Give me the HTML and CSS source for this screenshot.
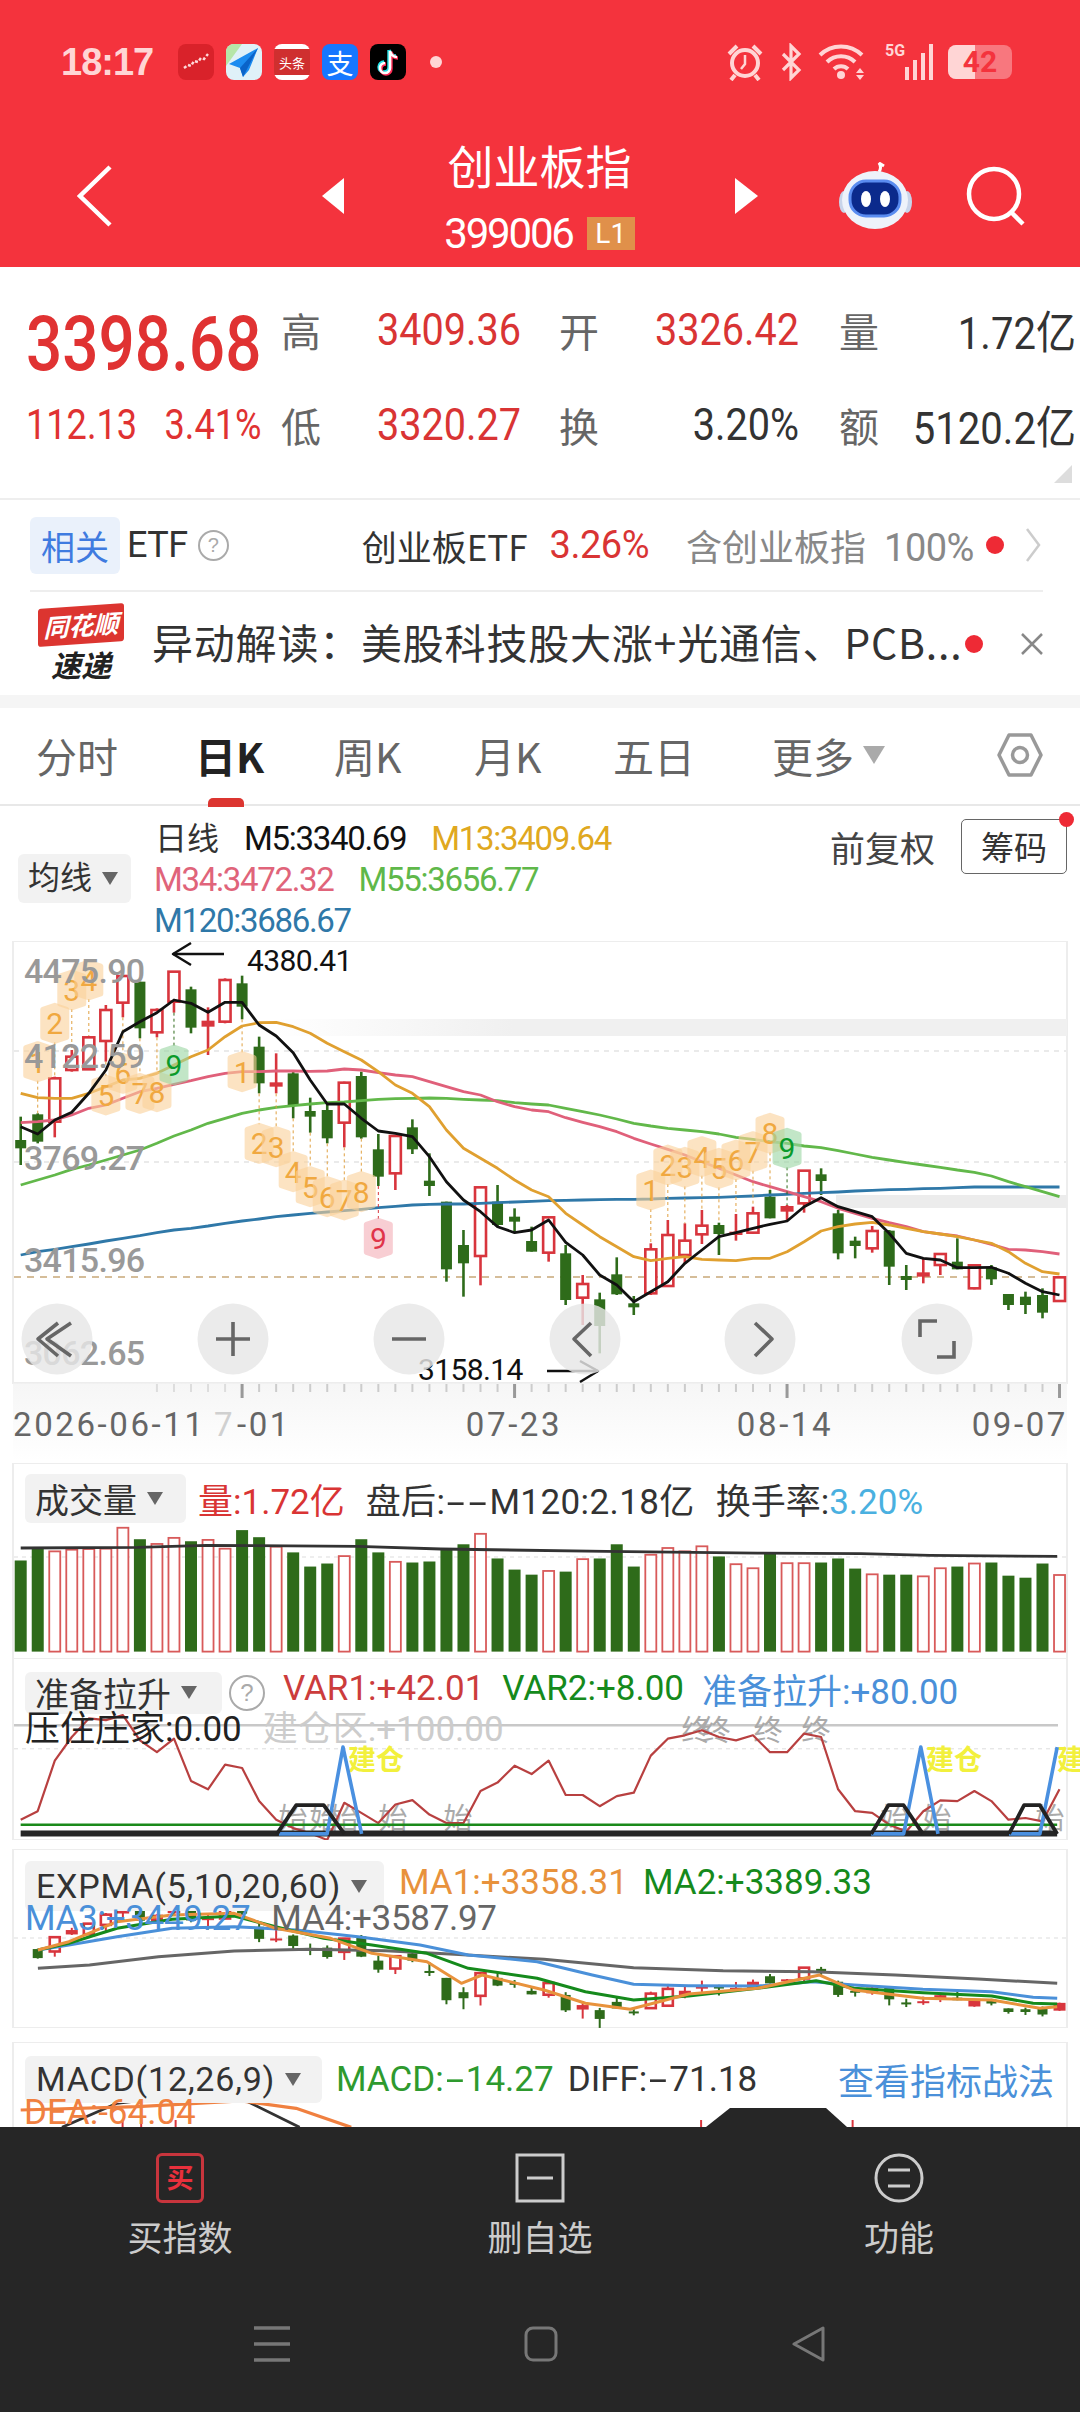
FILE: index.html
```html
<!DOCTYPE html>
<html lang="zh-CN">
<head>
    <meta charset="UTF-8">
    <meta name="viewport" content="width=device-width, initial-scale=1.0">
    <title>创业板指</title>
    <link rel="stylesheet" href="styles.css">
</head>
<body>
<div class="page">
    <header class="top">
        <div class="status">
            <span class="clock">18:17</span>
            <div class="apps">
                <span class="app app-red"><svg width="36" height="36" viewBox="0 0 36 36"><path d="M6 24l4-3 3 1 3-5 4 1 3-4 3 1 4-5" fill="none" stroke="#ffd9d9" stroke-width="2.4" stroke-dasharray="3 2"/></svg></span>
                <span class="app app-plane"><svg width="36" height="36" viewBox="0 0 36 36"><path d="M0 0h16L0 22z" fill="#b6e6a8"/><path d="M32 4L3 20l11 4 3 9 6-7z" fill="#1c8cf0"/><path d="M14 24L32 4 17 33z" fill="#0a63c8"/></svg></span>
                <span class="app app-news">头条</span>
                <span class="app app-pay">支</span>
                <span class="app app-tik"><svg width="36" height="36" viewBox="0 0 36 36"><path d="M20 7v17a5 5 0 1 1-5-5M20 7c1 4 4 6 7 6" fill="none" stroke="#25e0e6" stroke-width="3.4" transform="translate(-1 -1)"/><path d="M20 7v17a5 5 0 1 1-5-5M20 7c1 4 4 6 7 6" fill="none" stroke="#fe2c55" stroke-width="3.4" transform="translate(1 1)"/><path d="M20 7v17a5 5 0 1 1-5-5M20 7c1 4 4 6 7 6" fill="none" stroke="#fff" stroke-width="2.6"/></svg></span>
                <span class="app-dot"></span>
            </div>
            <div class="sys">
                <svg class="ic-alarm" width="38" height="38" viewBox="0 0 38 38"><circle cx="19" cy="20" r="13" fill="none" stroke="#ffd5d5" stroke-width="4"/><path d="M19 12v9l-4 5" fill="none" stroke="#ffd5d5" stroke-width="2.5"/><path d="M3 11l8-8M35 11l-8-8M9 32l-4 5M29 32l4 5" stroke="#ffd5d5" stroke-width="4" fill="none"/></svg>
                <svg width="24" height="38" viewBox="0 0 24 38"><path d="M4 11l16 16-8 8V3l8 8L4 27" fill="none" stroke="#ffd5d5" stroke-width="3.2"/></svg>
                <svg width="52" height="38" viewBox="0 0 52 38"><path d="M2 12a30 30 0 0 1 42 0M9 19a20 20 0 0 1 28 0M16 26a10 10 0 0 1 14 0" fill="none" stroke="#ffd5d5" stroke-width="4"/><circle cx="23" cy="32" r="4" fill="#ffd5d5"/><path d="M42 25l4 5h-8zM42 37l4-5h-8z" fill="#ffd5d5"/></svg>
                <span class="signal"><span class="five-g">5G</span><i class="b1"></i><i class="b2"></i><i class="b3"></i><i class="b4"></i></span>
                <span class="battery"><span class="battery-fill"></span><span class="battery-num">42</span></span>
            </div>
        </div>
        <div class="nav">
            <svg class="back" width="35" height="62" viewBox="0 0 35 62"><path d="M33 2L3 31l30 29" fill="none" stroke="#fff" stroke-width="4.5"/></svg>
            <span class="tri-left"></span>
            <div class="title-block">
                <div class="title">创业板指</div>
                <div class="code-row"><span class="code">399006</span><span class="level">L1</span></div>
            </div>
            <span class="tri-right"></span>
            <svg class="robot" width="73" height="68" viewBox="0 0 73 68">
                <path d="M40 10c2-3 2-6 0-9l5 3" fill="none" stroke="#fff" stroke-width="3"/>
                <ellipse cx="5" cy="40" rx="5" ry="11" fill="#c8d4ea"/><ellipse cx="68" cy="40" rx="5" ry="11" fill="#c8d4ea"/>
                <ellipse cx="36" cy="38" rx="33" ry="29" fill="#eef2fa"/>
                <rect x="11" y="19" width="50" height="35" rx="16" fill="#0b2a8c"/>
                <rect x="11" y="19" width="50" height="35" rx="16" fill="none" stroke="#5a8cf0" stroke-width="3"/>
                <ellipse cx="27" cy="37" rx="5" ry="8" fill="#fff"/><ellipse cx="46" cy="37" rx="5" ry="8" fill="#fff"/>
            </svg>
            <svg class="search" width="60" height="60" viewBox="0 0 60 60"><circle cx="28" cy="28" r="25" fill="none" stroke="#fff" stroke-width="4.5"/><path d="M45 46l12 12" stroke="#fff" stroke-width="4.5"/></svg>
        </div>
    </header>

    <section class="quote">
        <div class="price">3398.68</div>
        <div class="q-label">高</div><div class="q-val up">3409.36</div>
        <div class="q-label">开</div><div class="q-val up right">3326.42</div>
        <div class="q-label">量</div><div class="q-val end">1.72亿</div>
        <div class="change"><span>112.13</span><span>3.41%</span></div>
        <div class="q-label">低</div><div class="q-val up">3320.27</div>
        <div class="q-label">换</div><div class="q-val right">3.20%</div>
        <div class="q-label">额</div><div class="q-val end">5120.2亿</div>
        <span class="corner"></span>
    </section>

    <div class="etf">
        <span class="etf-tag">相关</span>
        <span class="etf-name">ETF</span>
        <span class="help">?</span>
        <span class="etf-fund">创业板ETF</span>
        <span class="etf-pct">3.26%</span>
        <span class="etf-note">含创业板指<b class="etf-share">100%</b></span>
        <span class="dot"></span>
        <svg width="16" height="34" viewBox="0 0 16 34"><path d="M2 1l12 16L2 33" fill="none" stroke="#ccc" stroke-width="2.5"/></svg>
    </div>

    <div class="news">
        <div class="logo">
            <div class="logo-top">同花顺</div>
            <div class="logo-bottom">速递</div>
        </div>
        <span class="news-text">异动解读：美股科技股大涨+光通信、PCB...</span>
        <span class="dot"></span>
        <svg class="news-x" width="24" height="24" viewBox="0 0 24 24"><path d="M2 2l20 20M22 2L2 22" stroke="#888" stroke-width="2.5"/></svg>
    </div>

    <div class="band"></div>

    <nav class="tabs">
        <span class="tab">分时</span>
        <span class="tab active">日K</span>
        <span class="tab">周K</span>
        <span class="tab">月K</span>
        <span class="tab">五日</span>
        <span class="tab">更多<i class="tab-arrow"></i></span>
        <svg width="46" height="46" viewBox="0 0 46 46"><path d="M2 23L12 3h22l10 20-10 20H12z" fill="none" stroke="#999" stroke-width="3.5" stroke-linejoin="round"/><circle cx="23" cy="23" r="7.5" fill="none" stroke="#999" stroke-width="3.5"/></svg>
    </nav>

    <div class="legend">
        <span class="select select-ma">均线<i class="arrow"></i></span>
        <div class="legend-lines">
            <div><span class="cn">日线</span><span class="black">M5:3340.69</span><span class="ma13">M13:3409.64</span></div>
            <div class="l2"><span class="ma34">M34:3472.32</span><span class="ma55">M55:3656.77</span></div>
            <div class="l2"><span class="ma120">M120:3686.67</span></div>
        </div>
        <div class="legend-right">
            <span class="adjust">前复权</span>
            <span class="chip">筹码<i class="chip-dot"></i></span>
        </div>
    </div>

    <svg id="kline" class="chart" width="1080" height="522" viewBox="0 941 1080 522"></svg>

    <div class="pane">
        <svg id="vol" class="chart" width="1080" height="195" viewBox="0 1463 1080 195"></svg>
        <div class="pane-head head-vol">
            <span class="select">成交量<i class="arrow"></i></span>
            <span class="red">量:1.72亿</span><span class="dark after-hours">盘后:<i class="dash">-</i><i class="dash">-</i>M120:2.18亿</span><span class="dark">换手率:<b class="cyan">3.20%</b></span>
        </div>
    </div>

    <div class="pane">
        <svg id="tech" class="chart" width="1080" height="182" viewBox="0 1658 1080 182"></svg>
        <div class="pane-head head-tech">
            <span class="select">准备拉升<i class="arrow"></i></span>
            <span class="help big-help">?</span>
            <span class="red2 lift">VAR1:+42.01</span><span class="green lift">VAR2:+8.00</span><span class="blue lift">准备拉升:+80.00</span>
        </div>
        <div class="pane-sub sub-tech"><span class="dark">压住庄家:0.00</span><span class="faint">建仓区:+100.00</span></div>
    </div>

    <div class="pane pane-gap">
        <svg id="expma" class="chart" width="1080" height="179" viewBox="0 1849 1080 179"></svg>
        <div class="pane-head head-expma">
            <span class="select wide-name">EXPMA(5,10,20,60)<i class="arrow"></i></span>
            <span class="orange lift">MA1:+3358.31</span><span class="green lift">MA2:+3389.33</span>
        </div>
        <div class="pane-sub sub-expma"><span class="blue">MA3:+3449.27</span><span class="gray">MA4:+3587.97</span></div>
    </div>

    <div class="pane pane-gap2">
        <svg id="macd" class="chart" width="1080" height="85" viewBox="0 2042 1080 85"></svg>
        <div class="pane-head head-macd">
            <span class="select wide-name">MACD(12,26,9)<i class="arrow"></i></span>
            <span class="green2">MACD:<i class="dash">-</i>14.27</span><span class="dark">DIFF:<i class="dash">-</i>71.18</span>
            <span class="blue link">查看指标战法</span>
        </div>
        <div class="pane-sub sub-macd"><span class="orange2">DEA:-64.04</span></div>
    </div>

    <footer class="bottom">
        <div class="actions">
            <div class="action">
                <span class="buy-box">买</span>
                <span>买指数</span>
            </div>
            <div class="action">
                <svg width="50" height="50" viewBox="0 0 50 50"><rect x="2" y="2" width="46" height="46" fill="none" stroke="#ccc" stroke-width="3"/><path d="M12 25h26" stroke="#ccc" stroke-width="3"/></svg>
                <span>删自选</span>
            </div>
            <div class="action">
                <svg width="50" height="50" viewBox="0 0 50 50"><circle cx="25" cy="25" r="23" fill="none" stroke="#ccc" stroke-width="3"/><path d="M14 17h22M14 33h22" stroke="#ccc" stroke-width="3"/></svg>
                <span>功能</span>
            </div>
        </div>
        <div class="sysnav">
            <svg width="38" height="38" viewBox="0 0 38 38"><path d="M1 3h36M1 19h36M1 35h36" stroke="#777" stroke-width="3.5"/></svg>
            <svg width="34" height="36" viewBox="0 0 34 36"><rect x="2" y="2" width="30" height="32" rx="7" fill="none" stroke="#777" stroke-width="3"/></svg>
            <svg width="34" height="36" viewBox="0 0 34 36"><path d="M32 2v32L3 18z" fill="none" stroke="#777" stroke-width="3" stroke-linejoin="round"/></svg>
        </div>
    </footer>
</div>
<script src="charts.js"></script>
</body>
</html>
```
FILE: styles.css
```css
*{
    box-sizing:border-box;
}
body{
    margin:0;
    background-color:#fff;
    font-family:"Roboto","Noto Sans CJK SC",sans-serif;
    color:#333;
}
i{
    font-style:normal;
}
b{
    font-weight:normal;
}
.page{
    width:1080px;
    height:2412px;
    overflow:hidden;
    display:flex;
    flex-direction:column;
}

/* header */
.top{
    height:267px;
    flex:none;
    background-color:#f4333d;
}
.status{
    height:100px;
    display:flex;
    align-items:center;
    padding:24px 68px 0 61px;
}
.clock{
    width:117px;
    font-family:"Liberation Sans","Noto Sans CJK SC",sans-serif;
    font-size:38px;
    font-weight:bold;
    letter-spacing:-1px;
    color:#ffd5d5;
}
.apps{
    display:flex;
    align-items:center;
    gap:12px;
}
.app{
    width:36px;
    height:36px;
    border-radius:8px;
    overflow:hidden;
    display:flex;
    align-items:center;
    justify-content:center;
    font-family:"Noto Sans CJK SC",sans-serif;
}
.app-red{
    background-color:#d9222a;
}
.app-plane{
    background-color:#dff1f8;
}
.app-news{
    background:linear-gradient(#fff 14%,#cf2f2f 14%,#cf2f2f 86%,#fff 86%);
    color:#fff;
    font-size:13px;
}
.app-pay{
    background-color:#1677ff;
    color:#fff;
    font-size:27px;
}
.app-tik{
    background-color:#000;
}
.app-dot{
    width:12px;
    height:12px;
    margin-left:12px;
    border-radius:50%;
    background-color:#ffd5d5;
}
.sys{
    margin-left:auto;
    display:flex;
    align-items:center;
    gap:15px;
}
.signal{
    position:relative;
    width:48px;
    height:36px;
    display:flex;
    align-items:flex-end;
    justify-content:flex-end;
    gap:4px;
}
.five-g{
    position:absolute;
    left:0;
    top:-3px;
    font-size:16px;
    font-weight:bold;
    color:#ffd5d5;
}
.signal i{
    width:4px;
    background-color:#ffd5d5;
}
.b1{height:13px;}
.b2{height:20px;}
.b3{height:27px;}
.b4{height:36px;}
.battery{
    position:relative;
    width:64px;
    height:34px;
    border-radius:8px;
    overflow:hidden;
    background-color:#f8777e;
    text-align:center;
}
.battery-fill{
    position:absolute;
    left:0;
    top:0;
    bottom:0;
    width:27px;
    background-color:#ffd5d5;
}
.battery-num{
    position:relative;
    font-size:30px;
    font-weight:bold;
    line-height:34px;
    color:#f4333d;
}
.nav{
    height:167px;
    padding:24px 0 0 77px;
    display:flex;
    align-items:center;
    color:#fff;
}
.tri-left,.tri-right{
    width:0;
    height:0;
    border-top:18px solid transparent;
    border-bottom:18px solid transparent;
}
.tri-left{
    margin-left:210px;
    border-right:22px solid #fff;
}
.tri-right{
    border-left:23px solid #fff;
}
.title-block{
    width:391px;
    text-align:center;
}
.title{
    font-family:"Noto Sans CJK SC",sans-serif;
    font-size:46px;
    line-height:56px;
}
.code-row{
    margin-top:20px;
    height:44px;
    display:flex;
    align-items:center;
    justify-content:center;
    gap:14px;
}
.code{
    font-size:42px;
    letter-spacing:-2.2px;
}
.level{
    width:48px;
    height:33px;
    background-color:#e0904a;
    font-size:28px;
    line-height:33px;
}
.robot{
    margin-left:81px;
}
.search{
    margin-left:54px;
}

/* quote: the app numbers are narrower than any installed face */
.quote{
    position:relative;
    height:233px;
    flex:none;
    padding:15px 4px 0 26px;
    display:grid;
    grid-template-columns:255px 96px 182px 97px 183px 60px minmax(0,1fr);
    grid-template-rows:95px 95px;
    align-items:center;
    border-bottom:2px solid #eee;
}
.price{
    padding-top:28px;
    font-size:76px;
    font-weight:500;
    color:#e03232;
    white-space:nowrap;
    transform:scaleX(.84);
    transform-origin:left center;
}
.change{
    display:flex;
    gap:32px;
    font-size:42px;
    color:#e03232;
    white-space:nowrap;
    transform:scaleX(.86);
    transform-origin:left center;
}
.q-label{
    font-family:"Noto Sans CJK SC",sans-serif;
    font-size:40px;
    color:#666;
}
.q-val{
    font-size:45px;
    color:#333;
    white-space:nowrap;
    transform:scaleX(.88);
    transform-origin:left center;
}
.q-val.up{
    color:#d93434;
}
.q-val.right{
    display:flex;
    justify-content:flex-end;
    padding-right:40px;
    transform-origin:calc(100% - 40px) center;
}
.q-val.end{
    display:flex;
    justify-content:flex-end;
    transform:scaleX(.89);
    transform-origin:right center;
}
.corner{
    position:absolute;
    right:8px;
    bottom:15px;
    width:0;
    height:0;
    border-left:18px solid transparent;
    border-bottom:18px solid #ddd;
}

/* etf + news */
.etf{
    height:92px;
    flex:none;
    margin:0 37px 0 30px;
    display:flex;
    align-items:center;
    border-bottom:2px solid #eee;
    font-family:"Noto Sans CJK SC",sans-serif;
    font-size:35px;
}
.etf-tag{
    width:90px;
    height:57px;
    border-radius:6px;
    background-color:#eaf1fb;
    color:#3f7be0;
    font-size:34px;
    text-align:center;
    line-height:57px;
}
.etf-name{
    margin-left:7px;
    font-family:"Roboto",sans-serif;
    font-size:36px;
    letter-spacing:-.5px;
}
.help{
    width:31px;
    height:31px;
    margin-left:10px;
    border:2px solid #aaa;
    border-radius:50%;
    color:#aaa;
    font-family:"Liberation Sans",sans-serif;
    font-size:20px;
    line-height:27px;
    text-align:center;
}
.etf-fund{
    margin-left:133px;
    color:#333;
}
.etf-pct{
    margin-left:22px;
    font-family:"Roboto",sans-serif;
    font-size:38px;
    letter-spacing:-.5px;
    color:#d93434;
}
.etf-note{
    margin-left:37px;
    font-size:36px;
    color:#888;
}
.etf-share{
    margin-left:18px;
    font-family:"Roboto",sans-serif;
    font-size:38px;
    letter-spacing:-.5px;
}
.dot{
    width:18px;
    height:18px;
    margin:0 21px 0 12px;
    border-radius:50%;
    background-color:#ee2a35;
}
.news{
    height:103px;
    flex:none;
    padding-left:38px;
    display:flex;
    align-items:center;
}
.logo{
    width:86px;
    font-family:"Noto Sans CJK SC",sans-serif;
    font-style:italic;
    font-weight:bold;
    text-align:center;
}
.logo-top{
    height:38px;
    background-color:#dc3530;
    border-radius:3px;
    color:#fff;
    font-size:25px;
    line-height:36px;
    transform:skewY(-4deg);
}
.logo-bottom{
    margin-top:3px;
    font-size:30px;
    line-height:34px;
    color:#222;
}
.news-text{
    margin:0 0 6px 28px;
    width:801px;
    font-family:"Noto Sans CJK SC",sans-serif;
    font-size:41px;
    letter-spacing:.8px;
    white-space:nowrap;
    color:#333;
}
.news .dot{
    margin:0 37px 0 12px;
}
.band{
    height:13px;
    flex:none;
    background-color:#f5f5f5;
}

/* tabs */
.tabs{
    height:98px;
    flex:none;
    padding:0 0 3px 36px;
    display:grid;
    grid-template-columns:159px 139px 140px 139px 159px 225px 46px;
    align-items:center;
    border-bottom:2px solid #e8e8e8;
    font-family:"Noto Sans CJK SC",sans-serif;
    font-size:41px;
    color:#666;
}
.tab{
    position:relative;
    display:flex;
    align-items:center;
}
.tab.active{
    color:#222;
    font-weight:bold;
}
.tab.active::after{
    content:"";
    position:absolute;
    left:13px;
    top:73px;
    width:36px;
    height:9px;
    border-radius:5px 5px 0 0;
    background-color:#dc3530;
}
.tab-arrow{
    margin-left:9px;
    width:0;
    height:0;
    border-left:11px solid transparent;
    border-right:11px solid transparent;
    border-top:18px solid #aaa;
}

/* ma legend */
.legend{
    height:135px;
    flex:none;
    padding:10px 13px 0 18px;
    display:flex;
    align-items:flex-start;
    font-size:33px;
    letter-spacing:-1.3px;
    line-height:41px;
}
.select{
    height:49px;
    padding:0 8px 0 10px;
    display:inline-flex;
    align-items:center;
    border-radius:6px;
    background-color:#f2f2f2;
    color:#333;
}
.select-ma{
    width:113px;
    margin:38px 23px 0 0;
    font-size:32px;
    letter-spacing:0;
}
.arrow{
    margin-left:10px;
    width:0;
    height:0;
    border-left:8px solid transparent;
    border-right:8px solid transparent;
    border-top:13px solid #666;
}
.legend-lines span+span{
    margin-left:25px;
}
.cn{
    margin-left:1px;
    font-family:"Noto Sans CJK SC",sans-serif;
    font-size:32px;
    letter-spacing:0;
    color:#333;
}
.black{color:#111;}
.ma13{color:#e0a820;}
.ma34{color:#e0647a;}
.ma55{color:#5fb84a;}
.ma120{color:#2f78a8;}
.legend-right{
    margin-left:auto;
    margin-top:3px;
    display:flex;
    align-items:center;
    gap:26px;
    letter-spacing:0;
}
.adjust{
    font-family:"Noto Sans CJK SC",sans-serif;
    font-size:35px;
    color:#444;
}
.chip{
    position:relative;
    width:106px;
    height:55px;
    border:1.5px solid #666;
    border-radius:5px;
    font-family:"Noto Sans CJK SC",sans-serif;
    font-size:33px;
    text-align:center;
    line-height:52px;
}
.chip-dot{
    position:absolute;
    right:-8px;
    top:-8px;
    width:15px;
    height:15px;
    border-radius:50%;
    background-color:#ee2a35;
}

/* charts */
.chart{
    display:block;
    flex:none;
}
.axis-price{
    font-size:34px;
    font-weight:500;
    letter-spacing:-.7px;
    fill:#999;
}
.extreme{
    font-size:30px;
    letter-spacing:-.6px;
    fill:#111;
}
.axis-date{
    font-size:33px;
    letter-spacing:2.6px;
    fill:#666;
}
.axis-date-fade{
    fill:#d0d0d0;
}
.tag-gray{
    font-family:"Noto Sans CJK SC",sans-serif;
    font-size:29px;
    fill:#aaa;
}
.tag-yellow{
    font-family:"Noto Sans CJK SC",sans-serif;
    font-size:28px;
    font-weight:bold;
    fill:#f2f03c;
}
.pane{
    position:relative;
    flex:none;
}
.pane-gap{
    margin-top:9px;
}
.pane-gap2{
    margin-top:14px;
}
.pane-head,.pane-sub{
    position:absolute;
    left:25px;
    display:flex;
    align-items:center;
    font-size:35px;
    white-space:nowrap;
}
.pane-head .select{
    font-size:34px;
}
.lift{
    margin-top:-8px;
}
.wide-name{
    letter-spacing:.8px;
}
.after-hours{
    letter-spacing:.4px;
}
.dash{
    display:inline-block;
    width:22px;
    text-align:center;
    transform:scaleX(1.9);
}
.head-vol{
    top:10px;
    gap:21px;
}
.head-vol .select{
    width:161px;
    margin-right:-9px;
}
.head-tech{
    top:13px;
    gap:18px;
}
.head-tech .select{
    width:197px;
    height:42px;
    margin-right:-11px;
}
.big-help{
    width:36px;
    height:36px;
    margin:0;
    font-size:24px;
    line-height:32px;
    background-color:#fff;
}
.head-expma{
    top:12px;
    gap:15px;
}
.head-expma .select{
    width:359px;
    height:50px;
    padding-left:11px;
}
.head-macd{
    top:11px;
    gap:14px;
    right:26px;
}
.head-macd .select{
    width:297px;
    height:47px;
    padding-left:11px;
}
.link{
    margin-left:auto;
    font-family:"Noto Sans CJK SC",sans-serif;
    font-size:36px;
}
.sub-tech{
    top:42px;
    gap:21px;
}
.sub-expma{
    top:49px;
    gap:21px;
    letter-spacing:-.3px;
}
.sub-macd{
    top:50px;
    left:24px;
}
.red{color:#d93434;}
.red2{color:#cc3c3c;}
.dark{color:#333;}
.sub-tech .dark{color:#222;}
.cyan{color:#4ab0e0;}
.green{color:#158a1c;}
.green2{color:#2e9a2e;}
.blue{color:#4a90d9;}
.gray{color:#666;}
.orange{color:#e8923c;}
.orange2{color:#f08040;}
.faint{color:#ccc;}

/* bottom bar */
.bottom{
    flex:none;
    height:285px;
    background-color:#262626;
}
.actions{
    display:grid;
    grid-template-columns:360px 360px 358px;
    padding-top:26px;
}
.action{
    display:flex;
    flex-direction:column;
    align-items:center;
    gap:8px;
    font-family:"Noto Sans CJK SC",sans-serif;
    font-size:35px;
    line-height:50px;
    color:#ccc;
}
.buy-box{
    width:48px;
    height:50px;
    border:3px solid #c8353d;
    border-radius:6px;
    color:#e8303c;
    font-size:27px;
    font-weight:bold;
    line-height:42px;
    text-align:center;
}
.sysnav{
    margin-top:64px;
    padding-left:253px;
    display:flex;
    align-items:center;
    gap:233px;
}
```
FILE: charts.js
```js
// day k-line data, y values read in 3x pixels from y=930: type, wick top, body top, body bottom, wick bottom
const candles = [
    ["g",560,630,655,705],["g",550,553,635,640],["r",440,445,575,622],["r",360,380,420,425],["r",318,322,418,420],
    ["r",225,240,333,395],["r",135,138,218,262],["g",155,155,295,325],["r",235,240,307,322],["r",125,125,215,248],
    ["g",170,178,293,310],["r",232,272,290,375],["r",145,150,275,280],["g",137,160,230,268],["g",320,350,460,490],
    ["r",370,457,470,490],["g",420,430,525,565],["g",503,543,560,608],["g",520,540,625,640],["r",455,458,578,652],
    ["g",425,438,622,626],["g",612,658,740,768],["r",615,618,730,780],["g",568,592,658,672],["g",670,752,768,798],
    ["g",815,815,1018,1055],["g",900,945,1000,1100],["r",772,772,978,1066],["g",765,815,885,890],["g",835,860,875,905],
    ["g",890,933,965,965],["r",860,862,968,995],["g",945,970,1110,1125],["r",1035,1062,1103,1185],["g",1088,1108,1188,1270],
    ["g",982,1033,1093,1095],["g",1098,1120,1132,1155],["r",940,958,1090,1095],["r",870,915,1068,1070],["r",880,932,975,1000],
    ["r",840,887,913,942],["g",878,885,912,975],["r",852,905,915,932],["r",830,850,908,912],["g",780,800,865,865],
    ["r",825,828,845,870],["r",720,722,820,848],["g",715,733,753,795],["g",840,850,970,988],["g",920,932,948,985],
    ["r",888,903,955,968],["g",900,902,1010,1065],["g",1005,1038,1050,1080],["r",985,1027,1040,1060],["r",970,972,1005,1035],
    ["g",925,995,1018,1018],["r",1005,1006,1075,1078],["g",1005,1012,1048,1065],["g",1092,1092,1125,1140],["g",1085,1100,1125,1152],
    ["g",1075,1095,1148,1165],["r",1040,1042,1113,1115]
];
const ma5 = [590,612,570,547,490,420,305,275,248,210,220,247,217,217,285,318,368,450,522,522,565,603,610,620,680,755,810,845,890,908,900,870,937,975,1035,1065,1115,1085,1055,1000,960,920,908,895,883,873,830,803,830,845,860,910,970,985,990,1013,1013,1012,1030,1060,1085,1095];
const ma13 = [490,503,505,505,490,470,450,445,430,405,380,360,320,288,278,277,290,310,340,365,390,425,465,490,530,600,655,685,715,750,780,800,850,885,920,950,980,992,985,980,988,990,992,985,985,965,935,903,890,882,877,885,895,905,912,920,930,940,965,1000,1025,1032];
const ma34 = [578,575,570,555,535,525,505,485,475,463,452,440,430,425,425,423,423,424,423,417,420,428,435,440,455,470,485,495,515,530,540,545,563,577,590,605,625,642,658,675,695,715,735,755,770,785,800,815,835,850,865,878,890,905,912,918,930,943,958,960,965,972];
const ma55 = [765,750,735,718,705,690,675,660,640,618,600,580,565,550,540,532,527,522,518,516,512,508,506,505,504,505,508,510,512,518,522,525,535,545,555,567,580,588,595,600,605,612,622,628,635,640,648,653,662,672,682,690,698,705,712,720,727,738,755,770,785,800];
const ma120 = [975,965,958,950,942,933,925,917,908,900,895,888,880,873,867,860,855,850,846,842,838,833,829,825,823,822,822,820,818,816,814,812,811,810,809,808,808,807,805,804,803,802,800,798,795,793,790,788,786,783,781,779,778,776,775,773,771,771,771,771,771,771];
const volTops = [357,322,330,325,323,322,260,294,308,290,300,296,322,267,288,316,333,375,366,344,294,333,361,363,360,320,309,278,351,384,399,388,390,353,351,309,375,340,320,330,315,345,368,380,332,365,365,363,351,381,398,399,399,404,380,375,366,363,402,408,366,400];
const var1 = [1125,1100,950,880,825,830,815,890,925,885,1010,1035,962,972,1070,1125,1150,1165,1185,1075,1105,1135,1080,1067,1110,1135,1135,1040,1015,965,990,950,1052,1052,1085,1055,1045,935,885,875,860,880,890,875,925,925,870,880,1035,1100,1105,1140,1160,1100,1068,1070,1040,1070,1125,1120,1130,1035];

const RED = "#d8353d";
const GREEN = "#2e6b1a";

function X(i){
    return 20.7 + 17.03 * i;
}
// main chart y from the 3x reading
function Y(v){
    return 930 + v / 3;
}
// lower panes were read with the x squeezed to 1.452 and y at 2.963
function tx(v){
    return v / 1.452;
}
function ty(v){
    return 1440 + v / 2.963;
}
function ey(v){
    return 1840 + v / 3;
}
function my(v){
    return 2020 + v / 3;
}
function el(svg, name, attrs, text){
    const node = document.createElementNS("http://www.w3.org/2000/svg", name);
    for(const key in attrs){
        node.setAttribute(key, attrs[key]);
    }
    if(text){
        node.textContent = text;
    }
    svg.appendChild(node);
    return node;
}
function line(svg, points, color, width, extra){
    el(svg, "polyline", Object.assign({
        points: points.map(p => p[0].toFixed(1) + "," + p[1].toFixed(1)).join(" "),
        fill: "none", stroke: color, "stroke-width": width, "stroke-linejoin": "round"
    }, extra || {}));
}
function frame(svg, top, bottom){
    el(svg, "rect", {x: 13, y: top, width: 1054, height: bottom - top, fill: "#fff", stroke: "#ededed", "stroke-width": 2});
}
function drawCandle(svg, i, c, mapY, bodyWidth, stroke){
    const x = X(i);
    const color = c[0] == "r" ? RED : GREEN;
    el(svg, "line", {x1: x, x2: x, y1: mapY(c[1]), y2: mapY(c[4]), stroke: color, "stroke-width": stroke});
    const top = mapY(c[2]);
    const h = Math.max(mapY(c[3]) - top, 2);
    if(c[0] == "r" && h > 8){
        el(svg, "rect", {x: x - bodyWidth / 2, y: top, width: bodyWidth, height: h, fill: "#fff", stroke: color, "stroke-width": 2.6});
    }else{
        el(svg, "rect", {x: x - bodyWidth / 2 - (c[0] == "r" ? 1 : 0), y: top, width: bodyWidth + (c[0] == "r" ? 2 : 0), height: h, fill: color});
    }
}
function seriesPoints(values, mapY){
    return values.map((v, i) => [X(i), mapY(v)]);
}
function badge(svg, i, v, kind, n){
    const c = candles[i];
    const x = X(i);
    const y = Y(v);
    const fills = {o: "#fbd29a", g: "#9ad6a2", r: "#f4aeb6"};
    const inks = {o: "#f0a840", g: "#0a9a2a", r: "#e0354a"};
    // dotted lead from the badge to the candle
    const above = y < Y(c[1]);
    el(svg, "line", {x1: x, x2: x, y1: above ? y + 19 : Y(c[4]), y2: above ? Y(c[1]) : y - 19, stroke: kind == "g" ? GREEN : kind == "r" ? RED : "#e0a040", "stroke-width": 1, "stroke-dasharray": "3 3"});
    el(svg, "path", {d: `M${x-12} ${y-14}L${x} ${y-18}L${x+12} ${y-14}V${y+14}L${x} ${y+18}L${x-12} ${y+14}Z`, fill: fills[kind], stroke: fills[kind], opacity: 0.6, "stroke-width": 5, "stroke-linejoin": "round"});
    el(svg, "text", {x: x, y: y + 11, fill: inks[kind], "font-size": 30, "font-family": "Roboto,sans-serif", "text-anchor": "middle"}, String(n));
}

function drawKline(){
    const svg = document.getElementById("kline");
    const defs = el(svg, "defs", {});
    const fade = el(defs, "linearGradient", {id: "fade"});
    el(fade, "stop", {offset: "0", "stop-color": "#f0f0f0", "stop-opacity": 0});
    el(fade, "stop", {offset: "0.3", "stop-color": "#f0f0f0", "stop-opacity": 1});
    const down = el(defs, "linearGradient", {id: "down", x2: 0, y2: 1});
    el(down, "stop", {offset: "0", "stop-color": "#f2f2f2"});
    el(down, "stop", {offset: "1", "stop-color": "#fff"});

    frame(svg, 941, 1383);
    el(svg, "rect", {x: 275, y: 1019, width: 792, height: 17, fill: "url(#fade)"});
    el(svg, "rect", {x: 836, y: 1195, width: 231, height: 13, fill: "#ececec"});
    [1051, 1162].forEach(y => el(svg, "line", {x1: 14, x2: 1066, y1: y, y2: y, stroke: "#e4e4e4", "stroke-width": 1.5, "stroke-dasharray": "5 5"}));
    el(svg, "line", {x1: 14, x2: 1066, y1: 1277, y2: 1277, stroke: "#c8a878", "stroke-width": 1.5, "stroke-dasharray": "7 6"});

    candles.forEach((c, i) => drawCandle(svg, i, c, Y, 11, 2.6));

    line(svg, seriesPoints(ma120, Y), "#2f78a8", 2.8);
    line(svg, seriesPoints(ma55, Y), "#62b84a", 2.8);
    line(svg, seriesPoints(ma34, Y), "#e0607a", 2.8);
    line(svg, seriesPoints(ma13, Y), "#e0a030", 2.8);

    [[1,395,"o",1],[2,280,"o",2],[3,180,"o",3],[4,150,"o",4],[5,495,"o",5],[6,430,"o",6],[7,490,"o",7],[8,485,"o",8],[9,405,"g",9],
     [13,425,"o",1],[14,640,"o",2],[15,650,"o",3],[16,725,"o",4],[17,770,"o",5],[18,800,"o",6],[19,810,"o",7],[20,785,"o",8],[21,925,"r",9],
     [37,780,"o",1],[38,705,"o",2],[39,712,"o",3],[40,680,"o",4],[41,715,"o",5],[42,690,"o",6],[43,665,"o",7],[44,610,"o",8],[45,655,"g",9]
    ].forEach(b => badge(svg, b[0], b[1], b[2], b[3]));

    line(svg, seriesPoints(ma5, Y), "#111", 2.8);

    [["4475.90",983],["4122.59",1068],["3769.27",1170],["3415.96",1272],["3062.65",1365]].forEach(l => {
        el(svg, "text", {x: 24, y: l[1], class: "axis-price"}, l[0]);
    });
    el(svg, "text", {x: 247, y: 971, class: "extreme"}, "4380.41");
    el(svg, "text", {x: 418, y: 1380, class: "extreme"}, "3158.14");
    line(svg, [[224,954],[173,954]], "#111", 2.5);
    line(svg, [[191,943],[173,954],[191,965]], "#111", 2.5);
    line(svg, [[547,1371],[598,1371]], "#111", 2.5);
    line(svg, [[580,1361],[598,1371],[580,1382]], "#111", 2.5);

    [57,233,409,585,760,937].forEach(x => el(svg, "circle", {cx: x, cy: 1339, r: 35.5, fill: "#e6e6e6", "fill-opacity": 0.82}));
    const ink = {fill: "none", stroke: "#666", "stroke-width": 3.6};
    line(svg, [[71,1323],[47,1339],[71,1356]], "#666", 3.6);
    line(svg, [[58,1323],[38,1339],[58,1356]], "#666", 3.6);
    el(svg, "path", Object.assign({d: "M216 1339h34M233 1322v34"}, ink));
    el(svg, "path", Object.assign({d: "M392 1339h34"}, ink));
    line(svg, [[591,1323],[574,1339],[591,1356]], "#666", 3.6);
    line(svg, [[755,1323],[772,1339],[755,1356]], "#666", 3.6);
    el(svg, "path", Object.assign({d: "M920 1337v-16h17M954 1341v16h-17"}, ink));

    // axis ticks and dates
    el(svg, "rect", {x: 13, y: 1383, width: 1054, height: 78, fill: "url(#down)", "fill-opacity": 0.7});
    candles.forEach((c, i) => {
        const major = [13,29,45,61].indexOf(i) >= 0;
        if(i > 12){
            el(svg, "line", {x1: X(i), x2: X(i), y1: 1384, y2: major ? 1398 : 1392, stroke: major ? "#999" : "#ccc", "stroke-width": major ? 3 : 2});
        }else if(i > 7){
            el(svg, "line", {x1: X(i), x2: X(i), y1: 1384, y2: 1392, stroke: "#ddd", "stroke-width": 2});
        }
    });
    el(svg, "text", {x: 13, y: 1436, class: "axis-date"}, "2026-06-11");
    el(svg, "text", {x: 214, y: 1436, class: "axis-date axis-date-fade"}, "7");
    el(svg, "text", {x: 237, y: 1436, class: "axis-date"}, "-01");
    el(svg, "text", {x: 514, y: 1436, class: "axis-date", "text-anchor": "middle"}, "07-23");
    el(svg, "text", {x: 785, y: 1436, class: "axis-date", "text-anchor": "middle"}, "08-14");
    el(svg, "text", {x: 1068, y: 1436, class: "axis-date", "text-anchor": "end"}, "09-07");
}

function drawVol(){
    const svg = document.getElementById("vol");
    frame(svg, 1463, 1664);
    el(svg, "line", {x1: 14, x2: 1066, y1: 1557, y2: 1557, stroke: "#ddd", "stroke-width": 1, "stroke-dasharray": "4 4"});
    const bottom = ty(627);
    volTops.forEach((t, i) => {
        const x = X(i);
        const top = ty(t);
        if(candles[i][0] == "r"){
            el(svg, "rect", {x: x - 5.5, y: top, width: 11, height: bottom - top, fill: "#fff", stroke: "#d85a5a", "stroke-width": 1.8});
        }else{
            el(svg, "rect", {x: x - 6, y: top, width: 12, height: bottom - top, fill: GREEN});
        }
    });
    line(svg, [[30,320],[200,318],[300,312],[520,315],[640,323],[880,330],[1100,335],[1250,337],[1350,342],[1535,345]].map(p => [tx(p[0]), ty(p[1])]), "#333", 2.8);
}

function drawTech(){
    const svg = document.getElementById("tech");
    frame(svg, 1658, 1840);
    el(svg, "line", {x1: 14, x2: 1058, y1: ty(845), y2: ty(845), stroke: "#c8c8c8", "stroke-width": 2.5});
    el(svg, "line", {x1: 14, x2: 1066, y1: ty(915), y2: ty(915), stroke: "#ddd", "stroke-width": 1, "stroke-dasharray": "4 4"});

    [[696,1730],[716,1730],[768,1730],[816,1730]].forEach(p => el(svg, "text", {x: p[0], y: p[1] + 11, class: "tag-gray", "text-anchor": "middle"}, "终"));
    [[293,1818],[324,1818],[344,1818],[393,1818],[458,1818],[895,1818],[937,1818],[1050,1818]].forEach(p => el(svg, "text", {x: p[0], y: p[1] + 11, class: "tag-gray", "text-anchor": "middle"}, "始"));
    [[348,1770],[926,1770]].forEach(p => el(svg, "text", {x: p[0], y: p[1], class: "tag-yellow"}, "建仓"));
    el(svg, "text", {x: 1057, y: 1770, class: "tag-yellow"}, "建");

    line(svg, seriesPoints(var1, ty), "#b84040", 2.2);
    el(svg, "line", {x1: tx(30), x2: tx(1535), y1: ty(1140), y2: ty(1140), stroke: "#1a8a1a", "stroke-width": 2.6});
    el(svg, "rect", {x: tx(30), y: ty(1157), width: tx(1505), height: 6, fill: "#262626"});

    [[405,475,498,525],[1265,1312,1337,1362],[1465,1510,1535,1535]].forEach(s => {
        const pts = [[s[0],1167],[s[1],1167],[s[2],910]];
        if(s[3] != s[2]){
            pts.push([s[3],1167]);
        }
        line(svg, pts.map(p => [tx(p[0]), ty(p[1])]), "#4a90e0", 3.6);
    });
    [[402,430,470,500],[1265,1290,1312,1340],[1465,1487,1510,1535]].forEach(s => {
        line(svg, [[s[0],1167],[s[1],1082],[s[2],1082],[s[3],1167]].map(p => [tx(p[0]), ty(p[1])]), "#222", 3.8);
    });
}

function drawExpma(){
    const svg = document.getElementById("expma");
    const clip = el(el(svg, "defs", {}), "clipPath", {id: "exclip"});
    el(clip, "rect", {x: 13, y: 1849, width: 1054, height: 179});
    frame(svg, 1849, 2028);
    el(svg, "line", {x1: 14, x2: 1066, y1: 1938, y2: 1938, stroke: "#ddd", "stroke-width": 1, "stroke-dasharray": "4 4"});
    const group = el(svg, "g", {"clip-path": "url(#exclip)"});
    const map = v => 1902 + (Y(v) - 971.7) * 0.33;
    candles.forEach((c, i) => {
        if(i > 0){
            drawCandle(group, i, c, map, 10, 2);
        }
    });
    const pts = list => list.map(p => [tx(p[0]), ey(p[1])]);
    line(svg, pts([[55,385],[130,375],[230,350],[340,333],[450,328],[560,332],[660,343],[790,358],[920,383],[1050,392],[1180,395],[1300,405],[1420,417],[1535,430]]), "#666", 3);
    line(svg, pts([[55,330],[100,315],[170,290],[250,265],[340,260],[430,270],[520,290],[610,315],[680,345],[780,365],[860,405],[920,433],[1000,437],[1100,438],[1180,425],[1240,435],[1340,448],[1440,455],[1500,472],[1535,475]]), "#4a90d9", 3);
    line(svg, pts([[55,330],[100,310],[170,265],[250,238],[340,228],[400,260],[470,295],[540,315],[620,340],[680,385],[780,415],[850,455],[920,480],[1000,468],[1100,445],[1185,422],[1240,445],[1340,458],[1440,468],[1500,490],[1535,492]]), "#158a1c", 3);
    line(svg, pts([[55,330],[100,305],[170,245],[250,225],[340,220],[400,265],[480,295],[540,340],[620,365],[670,430],[700,405],[790,450],[850,490],[915,508],[1000,462],[1100,445],[1190,405],[1240,450],[1340,475],[1440,480],[1510,505],[1535,500]]), "#e8923c", 3);
}

function drawMacd(){
    const svg = document.getElementById("macd");
    frame(svg, 2042, 2140);
    const pts = list => list.map(p => [tx(p[0]), my(p[1])]);
    [178,205,255,1018,1238].forEach(x => el(svg, "line", {x1: tx(x), x2: tx(x), y1: my(300), y2: my(322), stroke: RED, "stroke-width": 2}));
    line(svg, pts([[90,322],[170,250],[240,232],[360,245],[435,322]]), "#333", 2.8);
    line(svg, pts([[225,235],[270,228],[300,235],[330,225],[360,240]]), "#999", 2.8);
    line(svg, pts([[30,270],[200,260],[350,243],[430,265],[510,322]]), "#f08040", 3.2);
    el(svg, "path", {d: "M706 2127L730 2108H826L847 2127Z", fill: "#262626"});
}

drawKline();
drawVol();
drawTech();
drawExpma();
drawMacd();
```
